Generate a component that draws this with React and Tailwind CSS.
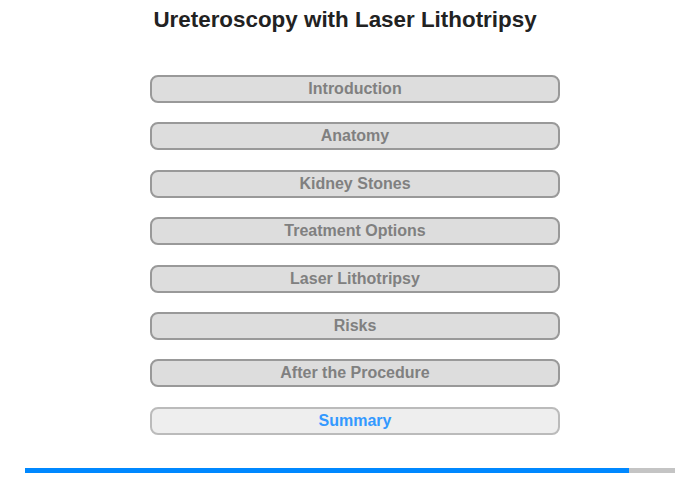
export default function App() {
  const items = [
    "Introduction",
    "Anatomy",
    "Kidney Stones",
    "Treatment Options",
    "Laser Lithotripsy",
    "Risks",
    "After the Procedure",
  ];
  return (
    <div className="w-[700px] h-[480px] bg-white flex flex-col" style={{ fontFamily: '"Liberation Sans", Arial, sans-serif' }}>
      <h1 className="mt-[7px] w-[690px] h-[26px] leading-[26px] text-center text-[22.4px] font-bold text-[#222222]">Ureteroscopy with Laser Lithotripsy</h1>
      <div className="mt-[42px] ml-[150px] flex flex-col gap-[19.4px]">
        {items.map((t) => (
          <div key={t} className="w-[410px] h-[28px] rounded-[8px] border-2 border-[#999999] bg-[#dddddd] flex items-center justify-center text-[16px] font-bold text-[#808080]">
            {t}
          </div>
        ))}
        <div className="w-[410px] h-[28px] rounded-[8px] border-2 border-[#bbbbbb] bg-[#eeeeee] flex items-center justify-center text-[16px] font-bold text-[#3399ff]">
          Summary
        </div>
      </div>
      <div className="mt-[33px] ml-[25px] w-[650px] h-[5px] bg-[#c4c4c4] flex">
        <div className="w-[604px] h-full bg-[#0088ff]" />
      </div>
    </div>
  );
}
